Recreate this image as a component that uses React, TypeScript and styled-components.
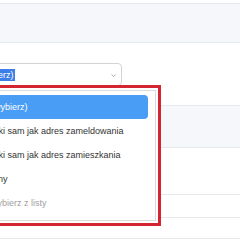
import React from 'react';
import styled, {createGlobalStyle} from 'styled-components';

const GlobalStyle = createGlobalStyle`
    *, *::before, *::after {
        box-sizing: border-box;
    }
    html, body {
        margin: 0;
        padding: 0;
        background: #fff;
        overflow: hidden;
    }
    body {
        font-family: "Liberation Sans", Arial, sans-serif;
        color: #333;
    }
`;

const options = [
    '(wybierz)',
    'taki sam jak adres zameldowania',
    'taki sam jak adres zamieszkania',
    'inny',
];

export default function App() {
    return (
        <>
            <GlobalStyle/>
            <Page>
                <HeaderBand/>
                <Row height={63}>
                    <SelectWrap>
                        <Select>
                            <Selected>(wybierz)</Selected>
                            <Caret width="5" height="3" viewBox="0 0 5 3">
                                <path d="M0.5 0.5 L2.5 2.5 L4.5 0.5" fill="none" stroke="#999" strokeWidth="0.8"/>
                            </Caret>
                        </Select>
                        <Highlight>
                            <Panel>
                                {options.map((o, i) => (
                                    <Option key={o} active={i === 0}>{o}</Option>
                                ))}
                                <Option muted>wybierz z listy</Option>
                            </Panel>
                        </Highlight>
                    </SelectWrap>
                </Row>
                <Row height={42} gray/>
                <Row height={47}/>
                <Row height={23}/>
                <Row height={21}/>
            </Page>
        </>
    );
}

const Page = styled.div`
    display: flex;
    flex-direction: column;
    padding-top: 3px;
`;

const HeaderBand = styled.div`
    height: 40px;
    background: #f5f7fa;
    border-top: 1px solid #e4e7eb;
    border-bottom: 1px solid #e4e7eb;
`;

const Row = styled.div<{height: number; gray?: boolean}>`
    height: ${(p) => p.height}px;
    flex: none;
    background: ${(p) => (p.gray ? '#f5f7fa' : '#fff')};
    border-bottom: 1px solid #e6e8eb;
    display: flex;
    align-items: flex-start;
`;

const SelectWrap = styled.div`
    position: relative;
    margin-top: 20px;
    margin-left: -30px;
`;

const Select = styled.div`
    width: 152px;
    height: 23px;
    border: 1px solid #d3d3d3;
    border-radius: 4px;
    background: #fff;
    display: flex;
    align-items: center;
    justify-content: space-between;
    padding: 0 5px 0 6px;
    font-size: 9px;
`;

const Selected = styled.span`
    background: #3d7fe6;
    color: #fff;
    line-height: 12px;
    padding-right: 1px;
`;

const Caret = styled.svg`
    display: block;
    margin-top: 1px;
`;

const Highlight = styled.div`
    position: absolute;
    top: 22px;
    left: 0;
    width: 191px;
    height: 141px;
    border: 3px solid #d42631;
    padding: 2px;
    background: #fff;
`;

const Panel = styled.div`
    height: 100%;
    border: 1px solid #dcdcdc;
    padding: 4px 7px 0 7px;
    display: flex;
    flex-direction: column;
`;

const Option = styled.div<{active?: boolean; muted?: boolean}>`
    height: 24px;
    flex: none;
    display: flex;
    align-items: center;
    padding-left: 8px;
    font-size: 9px;
    border-radius: 4px;
    background: ${(p) => (p.active ? '#4a9df5' : 'transparent')};
    color: ${(p) => (p.active ? '#fff' : p.muted ? '#a0a0a0' : '#333')};
`;
